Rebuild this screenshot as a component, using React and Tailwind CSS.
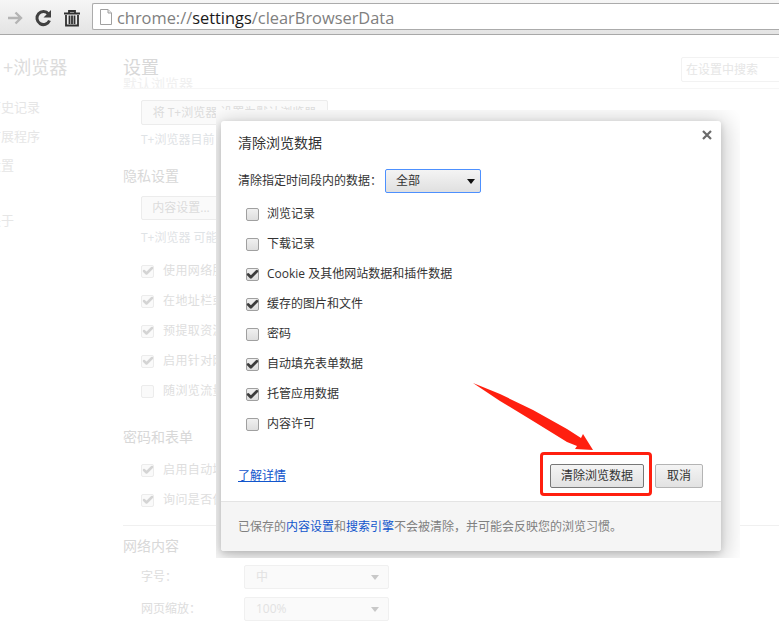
import { Check } from 'lucide-react';

const CJK = "font-['Open_Sans','Noto_Sans_CJK_SC',sans-serif]";

const OPTIONS = [
  { label: '浏览记录', checked: false },
  { label: '下载记录', checked: false },
  { label: 'Cookie 及其他网站数据和插件数据', checked: true },
  { label: '缓存的图片和文件', checked: true },
  { label: '密码', checked: false },
  { label: '自动填充表单数据', checked: true },
  { label: '托管应用数据', checked: true },
  { label: '内容许可', checked: false },
];

const PRIVACY = [
  { label: '使用网络服务', checked: true },
  { label: '在地址栏或', checked: true },
  { label: '预提取资源', checked: true },
  { label: '启用针对网', checked: true },
  { label: '随浏览流量', checked: false },
];

// 背景页里的复选框（淡色）
function FadedCheck({ label, checked }) {
  return (
    <div className="h-[30px] flex items-center gap-[9px]">
      <span className="w-[13px] h-[13px] border border-[#ececec] rounded-[2px] bg-[#fafafa] flex items-center justify-center">
        {checked && <Check size={12} strokeWidth={5} className="text-[#d4d4d4] shrink-0" />}
      </span>
      <span className="text-[12px] tracking-[0.4px] text-[#dedede] whitespace-nowrap">{label}</span>
    </div>
  );
}

function FadedSelect({ label, value, className }) {
  return (
    <div className={`flex items-center ${className}`}>
      <span className="w-[103px] text-[12px] text-[#dddddd]">{label}</span>
      <div className="w-[145px] h-[24px] border border-[#f0f0f0] rounded-[2px] bg-[#fafafa] flex items-center justify-between pl-[11px] pr-[9px]">
        <span className="text-[12px] text-[#e2e2e2]">{value}</span>
        <span className="w-0 h-0 border-x-[4px] border-x-transparent border-t-[5px] border-t-[#c8c8c8]" />
      </div>
    </div>
  );
}

function SettingsBackground() {
  return (
    <div className="flex h-[590px] overflow-hidden bg-white">
      <div className="w-[123px] shrink-0 pt-[20px]">
        <div className="ml-[3px] text-[18px] leading-[24px] text-[#dcdcdc] whitespace-nowrap">+浏览器</div>
        <div className="mt-[14px] -ml-[12px] flex flex-col text-[13px] text-[#e6e6e6]">
          <div className="h-[29px] leading-[29px]">历史记录</div>
          <div className="h-[29px] leading-[29px]">扩展程序</div>
          <div className="h-[29px] leading-[29px]">设置</div>
          <div className="h-[26px]" />
          <div className="h-[29px] leading-[29px]">关于</div>
        </div>
      </div>

      <div className="flex-1 min-w-0">
        <div className="h-[54px] border-b border-[#f6f6f6] flex items-start justify-between pt-[20px] relative overflow-hidden">
          <div className="text-[18px] leading-[24px] text-[#d8d8d8]">设置</div>
          <div className="absolute left-0 top-[40px] text-[14px] leading-[18px] text-[#f0f0f0]">默认浏览器</div>
          <div className="w-[110px] -mr-[12px] mt-[2px] h-[25px] border border-[#f2f2f2] rounded-[2px] text-[12px] leading-[23px] pl-[4px] text-[#e6e6e6]">在设置中搜索</div>
        </div>

        <div className="pl-[18px]">
          <div className="mt-[11px] w-[187px] h-[25px] border border-[#ececec] rounded-[2px] bg-[#fafafa] text-center text-[12px] leading-[23px] text-[#dcdcdc] whitespace-nowrap">将 T+浏览器 设置为默认浏览器</div>
          <div className="mt-[6px] text-[12px] leading-[18px] text-[#dfe3e6]">T+浏览器目前</div>
          <div className="-ml-[18px] mt-[17px] text-[14px] leading-[20px] text-[#d8d8d8]">隐私设置</div>
          <div className="mt-[10px] w-[80px] h-[24px] border border-[#ececec] rounded-[2px] bg-[#fafafa] text-center text-[12px] leading-[22px] text-[#dcdcdc]">内容设置...</div>
          <div className="mt-[9px] text-[12px] leading-[18px] text-[#dfe3e6] whitespace-nowrap">T+浏览器 可能</div>
          <div className="mt-[9px]">
            {PRIVACY.map((item) => (
              <FadedCheck key={item.label} {...item} />
            ))}
          </div>
          <div className="-ml-[18px] mt-[21px] text-[14px] leading-[20px] text-[#d8d8d8]">密码和表单</div>
          <div className="mt-[8px]">
            <FadedCheck label="启用自动填充" checked />
            <FadedCheck label="询问是否保存" checked />
          </div>
          <div className="-ml-[18px] mt-[10px] border-t border-[#f0f0f0]" />
          <div className="-ml-[18px] mt-[10px] text-[14px] leading-[20px] text-[#d8d8d8]">网络内容</div>
          <FadedSelect label="字号：" value="中" className="mt-[9px]" />
          <FadedSelect label="网页缩放：" value="100%" className="mt-[8px]" />
        </div>
      </div>
    </div>
  );
}

function Toolbar() {
  return (
    <div className="h-[35px] flex items-center bg-gradient-to-b from-[#f6f6f6] to-[#e4e4e4] border-b border-[#a8a8a8]">
      <svg width="92" height="35" viewBox="0 0 92 35" className="shrink-0">
        <path d="M8 18h12M15.500 12.500 21 18l-5.500 5.500" fill="none" stroke="#b4b4b4" strokeWidth="2.400" />
        <path d="M48.500 14A6.500 6.500 0 1 0 49.500 20.500" fill="none" stroke="#404040" strokeWidth="3" />
        <path d="M51 10v7.500h-7.500z" fill="#404040" />
        <path d="M64 13.500h16M69 13v-2h6v2" fill="none" stroke="#303030" strokeWidth="1.800" />
        <path d="M66 15v10.500h12V15M69.500 15.500v8.500M72 15.500v8.500M74.500 15.500v8.500" fill="none" stroke="#303030" strokeWidth="1.800" />
      </svg>
      <div className="flex-1 h-[27px] -mt-[1px] flex items-center bg-white border border-[#ababab] border-r-0 rounded-l-[2px] pl-[7px]">
        <svg width="12" height="16" viewBox="0 0 12 16" className="shrink-0">
          <path d="M.500.500h7.500l3.500 3.500v11.500H.500z" fill="#fff" stroke="#a0a0a0" />
          <path d="M8 .500V4h3.500" fill="#e8e8e8" stroke="#a0a0a0" />
        </svg>
        <span className="ml-[5px] mt-[4px] text-[16.4px] text-[#808080] font-['Open_Sans',sans-serif] whitespace-nowrap">
          chrome://<span className="text-[#1a1a1a]">settings</span>/clearBrowserData
        </span>
      </div>
    </div>
  );
}

function OptionRow({ label, checked }) {
  return (
    <div className="h-[30px] flex items-center gap-[8px]">
      <span className="w-[13px] h-[13px] border border-[#a0a0a0] rounded-[2px] bg-gradient-to-b from-[#f0f0f0] to-[#dedede] flex items-center justify-center">
        {checked && <Check size={13} strokeWidth={5} className="text-[#3c3c3c] shrink-0" />}
      </span>
      <span className="text-[12px] text-[#333333] whitespace-nowrap">{label}</span>
    </div>
  );
}

function ClearDataDialog() {
  return (
    <div className="relative ml-[5px] mt-[11px] w-[500px] h-[430px] flex flex-col bg-white rounded-[3px] shadow-[0_4px_23px_5px_rgba(0,0,0,0.2),0_2px_6px_rgba(0,0,0,0.15)]">
      <div className="relative px-[17px] pt-[13px] flex-1">
        <svg width="10" height="10" viewBox="0 0 10 10" className="absolute right-[9px] top-[9px]">
          <path d="M1 1l8 8M9 1l-8 8" stroke="#6a6a6a" strokeWidth="2.200" />
        </svg>
        <div className="text-[14px] leading-[18px] text-[#333333]">清除浏览数据</div>
        <div className="mt-[17px] flex items-center">
          <span className="text-[12px] text-[#333333]">清除指定时间段内的数据：</span>
          <div className="ml-[3px] w-[96px] h-[24px] border border-[#4d90fe] rounded-[2px] bg-gradient-to-b from-[#f4f4f4] to-[#e0e0e0] flex items-center justify-between pl-[10px] pr-[5px]">
            <span className="text-[12px] text-[#333333]">全部</span>
            <span className="w-0 h-0 border-x-[4px] border-x-transparent border-t-[5px] border-t-[#111111]" />
          </div>
        </div>
        <div className="mt-[6px] pl-[8px]">
          {OPTIONS.map((item) => (
            <OptionRow key={item.label} {...item} />
          ))}
        </div>
        <div className="absolute left-[17px] right-[18px] top-[343px] flex items-center justify-between">
          <a className="text-[12px] text-[#1155cc] underline">了解详情</a>
          <div className="flex gap-[11px]">
            <button className="w-[94px] h-[24px] border border-[#777777] rounded-[2px] bg-gradient-to-b from-[#f4f4f4] to-[#e2e2e2] text-[12px] text-[#333333]">清除浏览数据</button>
            <button className="w-[48px] h-[24px] border border-[#b4b4b4] rounded-[2px] bg-gradient-to-b from-[#f4f4f4] to-[#e2e2e2] text-[12px] text-[#333333]">取消</button>
          </div>
        </div>
      </div>
      <div className="h-[50px] shrink-0 flex items-center px-[17px] bg-[#f5f5f5] border-t border-[#e4e4e4] rounded-b-[3px] text-[12px] text-[#808080] whitespace-nowrap">
        已保存的<span className="text-[#1155cc]">内容设置</span>和<span className="text-[#1155cc]">搜索引擎</span>不会被清除，并可能会反映您的浏览习惯。
      </div>
    </div>
  );
}

function App() {
  return (
    <div className={`relative w-[779px] h-[625px] overflow-hidden bg-white ${CJK}`}>
      <Toolbar />
      <SettingsBackground />
      {/* 弹窗外层的白底，遮住背景并裁掉左边和下边的阴影 */}
      <div className="absolute left-[216px] top-[110px] w-[524px] h-[448px] overflow-hidden bg-white">
        <ClearDataDialog />
      </div>
      {/* 红色标注：箭头和方框 */}
      <svg width="779" height="625" viewBox="0 0 779 625" className="absolute left-0 top-0 pointer-events-none">
        <path d="M473 383 500 394 533 410 567 429 581 438 583 434 593 450 575 449 577 446 567 442 533 421 500 401Z" fill="#ff1f0f" />
      </svg>
      <div className="absolute left-[540px] top-[452px] w-[112px] h-[44px] border-[3px] border-[#ff1f0f] rounded-[4px] pointer-events-none" />
    </div>
  );
}

export default App;
